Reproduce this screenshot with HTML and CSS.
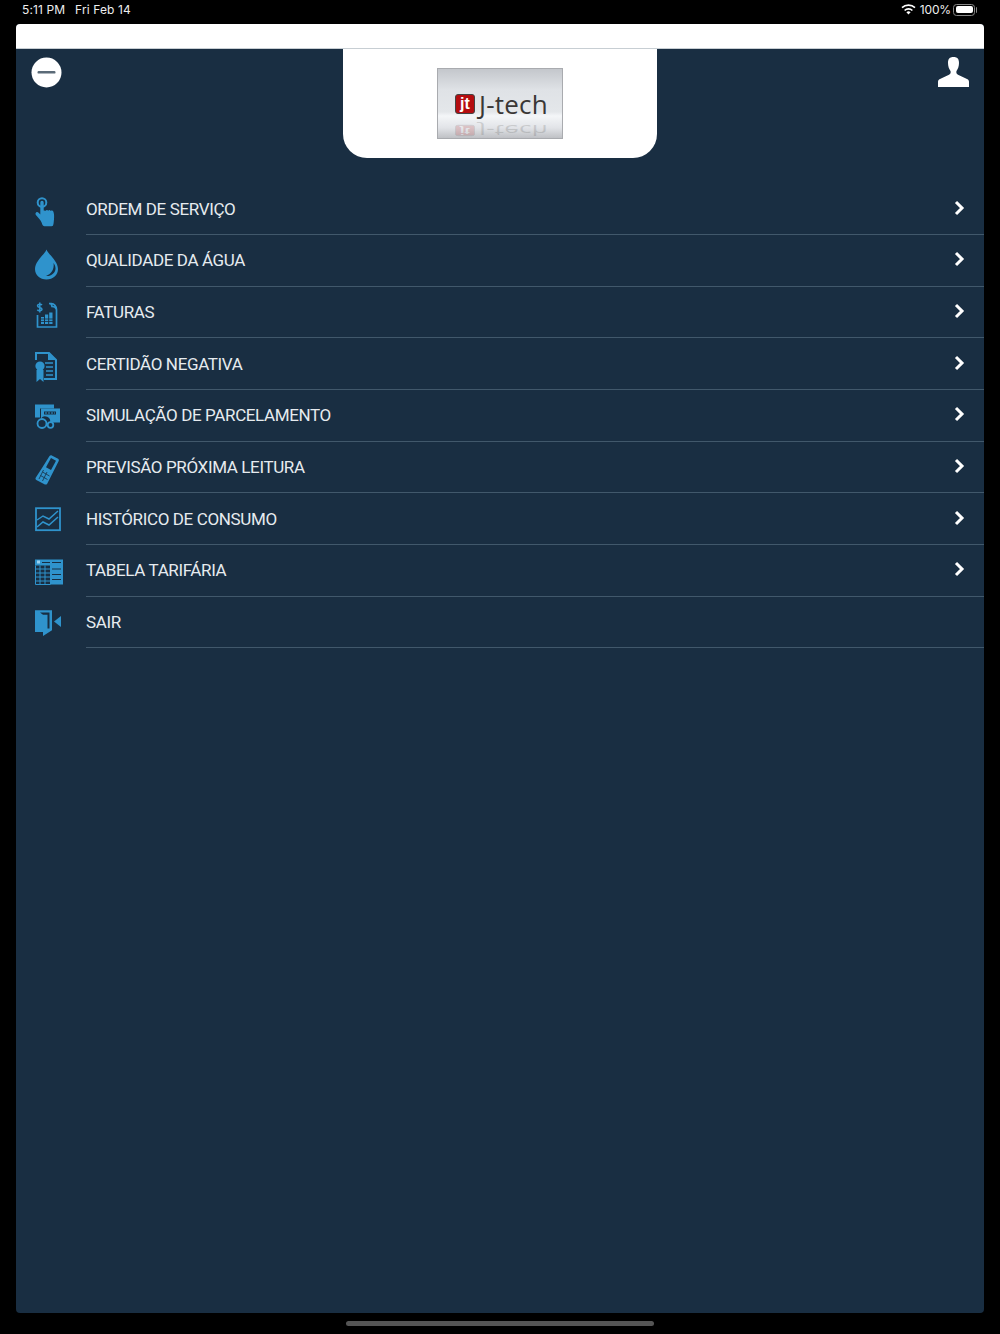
FILE: index.html
```html
<!DOCTYPE html>
<html lang="en">
<head>
  <meta charset="UTF-8" />
  <title>J-tech</title>
  <meta name="viewport" content="width=device-width, initial-scale=1" />
  <link rel="stylesheet" href="styles.css">
</head>
<body>

  <div class="status-bar">
    <div class="status-left">
      <span>5:11 PM</span>
      <span>Fri Feb 14</span>
    </div>
    <div class="status-right">
      <svg class="wifi" viewBox="0 0 15 11" width="15" height="11">
        <path d="M7.500 10.600 5.400 8.300a3 3 0 0 1 4.200 0z" fill="#fff"/>
        <path d="M3.600 6.500a5.600 5.600 0 0 1 7.800 0" fill="none" stroke="#fff" stroke-width="1.600"/>
        <path d="M1 3.700a9.400 9.400 0 0 1 13 0" fill="none" stroke="#fff" stroke-width="1.600"/>
      </svg>
      <span class="battery-pct">100%</span>
      <div class="battery"><div class="battery-level"></div></div>
    </div>
  </div>

  <div class="app">
    <div class="top-strip"></div>

    <header class="app-header">
      <svg class="round-btn" viewBox="0 0 31 31" width="31" height="31">
        <circle cx="15.500" cy="15.500" r="15" fill="#fff"/>
        <rect x="6.500" y="14" width="18" height="2.600" rx="1.200" fill="#5b6b78"/>
      </svg>

      <div class="logo-tab">
        <div class="logo">
          <div class="logo-row">
            <span class="logo-badge">jt</span>
            <span class="logo-name">J-tech</span>
          </div>
          <div class="logo-row logo-reflection">
            <span class="logo-badge">jt</span>
            <span class="logo-name">J-tech</span>
          </div>
        </div>
      </div>

      <svg class="user-btn" viewBox="0 0 31 30" width="31" height="30">
        <path d="M10 6c0-4 1.500-6 5.500-6S21 2 21 6c0 3-1 6-2.500 8-.5 1.500 0 3 1.500 3.700l9 4.300c1.500.700 2 1.500 2 3V30H0v-5c0-1.500.500-2.300 2-3l9-4.300c1.500-.700 2-2.200 1.500-3.700C11 12 10 9 10 6z" fill="#fff"/>
      </svg>
    </header>

    <ul class="menu">
      <li class="menu-item">
        <span class="menu-icon">
          <svg viewBox="0 0 32 32" width="32" height="32">
            <circle cx="7" cy="6.500" r="4.300" fill="none" stroke="#2f93cc" stroke-width="2"/>
            <path d="M5.300 6.500a1.700 1.700 0 0 1 3.400 0v8l2 .2c.500-.900 2-.900 2.500 0 .6-.8 2-.8 2.500.2.800-.6 2.300-.2 2.800 1 .6 1.500.8 4.500.5 7.300-.2 2-.2 4-.8 5.800-.2.800-.8 1.200-1.600 1.200H9.500c-1 0-1.700-.5-2.100-1.400-.6-2-1.300-3.700-2.600-5.300L.9 19c-.7-1-.5-2 .2-2.600.8-.6 1.800-.4 2.500.3l1.700 1.800z" fill="#2f93cc"/>
          </svg>
        </span>
        <div class="menu-body">
          <span class="menu-label">ORDEM DE SERVIÇO</span>
          <svg class="chevron" viewBox="0 0 11 16" width="11" height="16"><path d="M2 2l6 6-6 6" fill="none" stroke="#fff" stroke-width="3"/></svg>
        </div>
      </li>

      <li class="menu-item">
        <span class="menu-icon">
          <svg viewBox="0 0 32 32" width="32" height="32">
            <path d="M11.500 1.500C10 6 0 13 0 21c0 6 5 10.500 11.500 10.500S23 27 23 21C23 13 13 6 11.500 1.500z" fill="#2f93cc"/>
            <path d="M18.500 15c1 6-2 11-7.500 13 5 .5 9.500-3 9.500-7.500 0-2-.8-4-2-5.500z" fill="#182e42"/>
          </svg>
        </span>
        <div class="menu-body">
          <span class="menu-label">QUALIDADE DA ÁGUA</span>
          <svg class="chevron" viewBox="0 0 11 16" width="11" height="16"><path d="M2 2l6 6-6 6" fill="none" stroke="#fff" stroke-width="3"/></svg>
        </div>
      </li>

      <li class="menu-item">
        <span class="menu-icon">
          <svg viewBox="0 0 32 32" width="32" height="32">
            <path d="M7 6c-1-1.200-4.500-1-4.500.8 0 2.200 4.500 1.200 4.500 3.400 0 1.800-3.500 2-4.700.6M4.800 3.400v10" fill="none" stroke="#2f93cc" stroke-width="1.500"/>
            <path d="M14 4.500h2.500c2.500 0 5 3 5 6v17.500H2.500V16M14 4.500c2.500 0 3 1 3 3 2.500 0 3.500.5 4.500 3" fill="none" stroke="#2f93cc" stroke-width="1.700"/>
            <path d="M6 18h3v7H6zM10 15.500h3.200V25H10zM14.200 13.500h3.300V25h-3.300z" fill="#2f93cc"/>
            <path d="M5 20h14M5 22.500h14" stroke="#182e42" stroke-width=".8"/>
          </svg>
        </span>
        <div class="menu-body">
          <span class="menu-label">FATURAS</span>
          <svg class="chevron" viewBox="0 0 11 16" width="11" height="16"><path d="M2 2l6 6-6 6" fill="none" stroke="#fff" stroke-width="3"/></svg>
        </div>
      </li>

      <li class="menu-item">
        <span class="menu-icon">
          <svg viewBox="0 0 32 32" width="32" height="32">
            <path d="M1 9V2h13l7 7v19H9" fill="none" stroke="#2f93cc" stroke-width="2"/>
            <path d="M13 2v7h8z" fill="#2f93cc"/>
            <path d="M10 12h8M11 16h7M11 20h7M11 24h7" stroke="#2f93cc" stroke-width="1.600"/>
            <circle cx="5" cy="15" r="4.600" fill="#2f93cc"/>
            <path d="M1.500 19h7v12l-3.500-3-3.500 3z" fill="#2f93cc"/>
          </svg>
        </span>
        <div class="menu-body">
          <span class="menu-label">CERTIDÃO NEGATIVA</span>
          <svg class="chevron" viewBox="0 0 11 16" width="11" height="16"><path d="M2 2l6 6-6 6" fill="none" stroke="#fff" stroke-width="3"/></svg>
        </div>
      </li>

      <li class="menu-item">
        <span class="menu-icon">
          <svg viewBox="0 0 32 32" width="32" height="32">
            <path d="M0 1.500h19v4H5v9H0z" fill="#2f93cc"/>
            <path d="M6 5.500h19v14H15a5 5 0 0 0-9-4z" fill="#2f93cc"/>
            <path d="M9 8.500h12v3H9z" fill="#182e42"/>
            <path d="M10 10h10" stroke="#2f93cc" stroke-dasharray="2 1"/>
            <circle cx="7" cy="20.500" r="4.500" fill="none" stroke="#2f93cc" stroke-width="1.800"/>
            <circle cx="15.500" cy="22" r="2.800" fill="none" stroke="#2f93cc" stroke-width="1.800"/>
          </svg>
        </span>
        <div class="menu-body">
          <span class="menu-label">SIMULAÇÃO DE PARCELAMENTO</span>
          <svg class="chevron" viewBox="0 0 11 16" width="11" height="16"><path d="M2 2l6 6-6 6" fill="none" stroke="#fff" stroke-width="3"/></svg>
        </div>
      </li>

      <li class="menu-item">
        <span class="menu-icon">
          <svg viewBox="0 0 32 32" width="32" height="32">
            <path d="M14.500 2c.5-.8 1.500-1 2.300-.6l6.300 3.400c.8.400 1 1.300.6 2.100L12.200 29.700c-.5.800-1.500 1.200-2.300.7L1.300 26c-.8-.5-1-1.400-.6-2.200L7 14z" fill="#2f93cc"/>
            <path d="M16 4l5 2.800-5 9.200-5-2.800z" fill="#182e42"/>
            <path d="M7.500 18l7 4M5.500 21.500l7 4M8.500 16l-4.500 9M12 18l-4.500 9" stroke="#182e42" stroke-width=".8"/>
          </svg>
        </span>
        <div class="menu-body">
          <span class="menu-label">PREVISÃO PRÓXIMA LEITURA</span>
          <svg class="chevron" viewBox="0 0 11 16" width="11" height="16"><path d="M2 2l6 6-6 6" fill="none" stroke="#fff" stroke-width="3"/></svg>
        </div>
      </li>

      <li class="menu-item">
        <span class="menu-icon">
          <svg viewBox="0 0 32 32" width="32" height="32">
            <rect x="1" y="2.200" width="24" height="22" fill="none" stroke="#2f93cc" stroke-width="1.800"/>
            <path d="M2 14l6-4 6 3 9-8M2 21l6-5 6 3 9-8" fill="none" stroke="#2f93cc" stroke-width="1.500"/>
          </svg>
        </span>
        <div class="menu-body">
          <span class="menu-label">HISTÓRICO DE CONSUMO</span>
          <svg class="chevron" viewBox="0 0 11 16" width="11" height="16"><path d="M2 2l6 6-6 6" fill="none" stroke="#fff" stroke-width="3"/></svg>
        </div>
      </li>

      <li class="menu-item">
        <span class="menu-icon">
          <svg viewBox="0 0 32 32" width="32" height="32">
            <path d="M0 1.500h28v6H0zM15 7.500h13v19H15z" fill="#2f93cc"/>
            <path d="M.5 7.500v19h15M.5 11h15M.5 15h15M.5 19h15M.5 23h15M5 7.500v19M10 7.500v19" fill="none" stroke="#2f93cc"/>
            <path d="M7 4.500h8M17 4.500h9M17 11h9M17 16.500h9M17 21.500h9" stroke="#182e42"/>
            <rect x="2" y="2.500" width="3" height="3" fill="#9cd1ef"/>
          </svg>
        </span>
        <div class="menu-body">
          <span class="menu-label">TABELA TARIFÁRIA</span>
          <svg class="chevron" viewBox="0 0 11 16" width="11" height="16"><path d="M2 2l6 6-6 6" fill="none" stroke="#fff" stroke-width="3"/></svg>
        </div>
      </li>

      <li class="menu-item">
        <span class="menu-icon">
          <svg viewBox="0 0 32 32" width="32" height="32">
            <path d="M0 1.300h17v20l-9 5.700V23H0z" fill="#2f93cc"/>
            <path d="M5 3.500h9.500v16H12.500V5.800H8z" fill="#182e42"/>
            <path d="M26 7v11l-7-5.500z" fill="#2f93cc"/>
          </svg>
        </span>
        <div class="menu-body">
          <span class="menu-label">SAIR</span>
        </div>
      </li>
    </ul>
  </div>

  <div class="home-bar"></div>

</body>
</html>
```

FILE: styles.css
```css
:root {
  --navy: #192e42;
  --line: #41586b;
}

* {
  box-sizing: border-box;
}

body {
  margin: 0;
  height: 1334px;
  background: #000;
  color: #fff;
  font-family: "Roboto", sans-serif;
  overflow: hidden;
}

.status-bar {
  height: 24px;
  padding: 0 23px 5px 22px;
  display: flex;
  justify-content: space-between;
  align-items: center;
  font-family: "Inter", sans-serif;
  font-size: 12px;
  letter-spacing: 0.1px;
  color: #eee;
}

.status-left {
  display: flex;
  gap: 10px;
}

.status-right {
  display: flex;
  align-items: center;
  gap: 4px;
}

.battery-pct {
  letter-spacing: -0.15px;
}

.battery {
  position: relative;
  width: 22px;
  height: 12px;
  margin-left: -2px;
  margin-right: 2px;
  padding: 1.500px;
  border: 1px solid #888;
  border-radius: 3.500px;
}

.battery::after {
  content: "";
  position: absolute;
  top: 2px;
  right: -3px;
  width: 1.500px;
  height: 6px;
  background: #888;
  border-radius: 0 1px 1px 0;
}

.battery-level {
  height: 100%;
  background: #fff;
  border-radius: 2px;
}

.app {
  height: 1289px;
  margin: 0 16px;
  background: var(--navy);
  border-radius: 4px;
  overflow: hidden;
}

.top-strip {
  height: 25px;
  background: #fff;
  border-bottom: 1px solid #c7ced3;
}

.app-header {
  height: 109px;
  padding: 8px 15px 0;
  display: flex;
  justify-content: space-between;
  align-items: flex-start;
}

.logo-tab {
  width: 314px;
  height: 109px;
  margin-top: -8px;
  display: flex;
  justify-content: center;
  padding-top: 19px;
  background: #fff;
  border-radius: 0 0 24px 24px;
}

.logo {
  width: 126px;
  height: 71px;
  padding: 25px 0 0 17px;
  background: linear-gradient(#c4c7cc 0%, #dfe2e6 30%, #e4e7ea 62%, #f4f6f8 68%, #e2e4e8 85%, #bfc1c5 100%);
  border: 1px solid #a9abaf;
  overflow: hidden;
}

.logo-row {
  display: flex;
  align-items: center;
  gap: 4px;
  height: 20px;
}

.logo-badge {
  width: 20px;
  height: 20px;
  background: #b40d10;
  border: 1px solid #444;
  border-radius: 3px;
  color: #fff;
  font-family: "Liberation Sans", sans-serif;
  font-size: 16px;
  font-weight: bold;
  line-height: 17px;
  text-align: center;
}

.logo-name {
  font-family: "Open Sans", sans-serif;
  font-size: 26px;
  line-height: 20px;
  color: #3a3735;
  letter-spacing: 0.2px;
}

.logo-reflection {
  transform-origin: top;
  transform: scaleY(-0.55) translateY(-40px);
  opacity: 0.16;
}

.menu {
  list-style: none;
  margin: 25.300px 0 0;
  padding: 0;
}

.menu-item {
  height: 51.670px;
  display: flex;
}

.menu-icon {
  width: 70px;
  flex: none;
  padding-left: 19px;
  display: flex;
  align-items: center;
}

.menu-icon svg {
  margin-top: 6px;
}

.menu-body {
  flex: 1;
  padding-right: 19px;
  display: flex;
  justify-content: space-between;
  align-items: center;
  border-bottom: 1.500px solid var(--line);
}

.menu-label {
  font-size: 17px;
  letter-spacing: -0.37px;
  color: #e6ebef;
}

.chevron {
  margin-bottom: 2px;
}

.home-bar {
  width: 308px;
  height: 5px;
  margin: 8px auto 0;
  background: #555;
  border-radius: 3px;
}
```
